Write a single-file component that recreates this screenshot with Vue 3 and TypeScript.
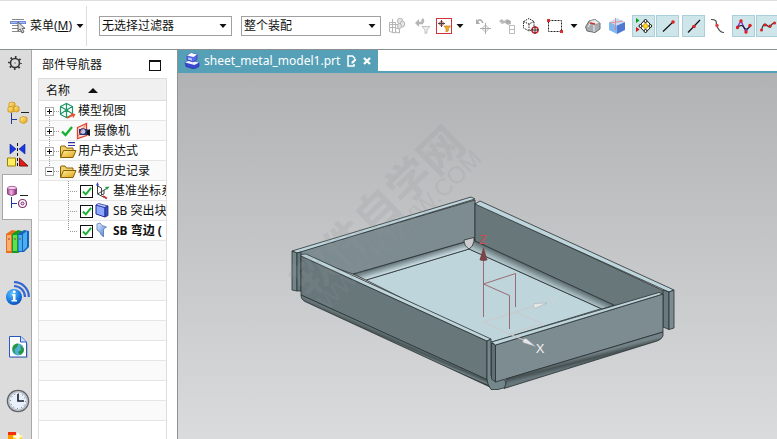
<script setup lang="ts">
import { ref } from 'vue'

interface Tool {
  id: string
  label: string
  kind: 'icon' | 'frame' | 'caret' | 'toggle'
  gap?: 's' | 'm'
}

interface TreeRow {
  icon: string
  text: string
  guide: 'first' | 'mid' | 'last'
  open?: boolean
  ticked?: boolean
}

interface Feature {
  icon: string
  text: string
  active?: boolean
}

const filter = ref('无选择过滤器')
const scope = ref('整个装配')
const checked = ref([true, true, true])

const tools: Tool[] = [
  { id: 't-boxes', label: '装配约束', kind: 'icon' },
  { id: 't-undofilter', label: '重置过滤器', kind: 'icon', gap: 's' },
  { id: 't-pickfilter', label: '选择过滤器', kind: 'frame' },
  { id: 't-caret', label: '更多过滤器', kind: 'caret' },
  { id: 't-undomove', label: '恢复位置', kind: 'icon', gap: 'm' },
  { id: 't-find', label: '查找', kind: 'icon' },
  { id: 't-cube', label: '显示隐藏对象', kind: 'icon' },
  { id: 't-rect', label: '矩形选择', kind: 'icon' },
  { id: 't-caret', label: '更多选择方式', kind: 'caret' },
  { id: 't-solid', label: '实体', kind: 'icon' },
  { id: 't-shade', label: '着色', kind: 'icon' },
  { id: 't-snap', label: '启用捕捉点', kind: 'toggle', gap: 's' },
  { id: 't-end', label: '端点', kind: 'toggle' },
  { id: 't-middle', label: '中点', kind: 'toggle', gap: 's' },
  { id: 't-curve', label: '曲线上的点', kind: 'icon' },
  { id: 't-pole', label: '极点', kind: 'toggle', gap: 's' },
  { id: 't-spline', label: '样条定义点', kind: 'toggle' },
]

const rail = [
  { id: 'r-gear', label: '设置', size: 'gear' },
  { id: 'r-assembly', label: '装配导航器', size: 'small' },
  { id: 'r-constraint', label: '约束导航器', size: 'small' },
  { id: 'r-part', label: '部件导航器', size: 'current' },
  { id: 'r-books', label: '重用库', size: 'small' },
  { id: 'r-info', label: 'HD3D 工具', size: 'large' },
  { id: 'r-web', label: 'Web 浏览器', size: 'large' },
  { id: 'r-clock', label: '历史记录', size: 'large' },
  { id: 'r-roles', label: '角色', size: 'large' },
]

const rows: TreeRow[] = [
  { icon: 'n-view', text: '模型视图', guide: 'first' },
  { icon: 'n-camera', text: '摄像机', guide: 'mid', ticked: true },
  { icon: 'n-expr', text: '用户表达式', guide: 'mid' },
  { icon: 'n-folder', text: '模型历史记录', guide: 'last', open: true },
]

const features: Feature[] = [
  { icon: 'n-csys', text: '基准坐标系' },
  { icon: 'n-tab', text: 'SB 突出块' },
  { icon: 'n-flange', text: 'SB 弯边 (', active: true },
]
</script>

<template>
  <div class="app">
    <svg class="sprite" width="0" height="0" aria-hidden="true">
      <defs>
        <linearGradient id="gold" x1="0" y1="0" x2="1" y2="1"><stop offset="0" stop-color="#fff3a0" /><stop offset="1" stop-color="#e0a010" /></linearGradient>
        <linearGradient id="pink" x1="0" x2="1"><stop offset="0" stop-color="#a04090" /><stop offset=".4" stop-color="#f0b8e4" /><stop offset="1" stop-color="#80206c" /></linearGradient>
        <linearGradient id="blue" x1="0" y1="0" x2="1" y2="1"><stop offset="0" stop-color="#e4f0ff" /><stop offset="1" stop-color="#3a6cd8" /></linearGradient>
        <radialGradient id="ball" cx=".4" cy=".3" r=".8"><stop offset="0" stop-color="#60c8ff" /><stop offset=".6" stop-color="#1878e0" /><stop offset="1" stop-color="#0840a0" /></radialGradient>

        <symbol id="t-menu" viewBox="0 0 16 16">
          <path d="M2 1.500h12M2 7.500h7M2 10.500h7M2 13.500h10" stroke="#888" stroke-width="1" />
          <path d="M0 3h16v3H0z" fill="#6c8ad8" /><path d="M1 4.500h14" stroke="#a8bcf0" />
          <path d="M8 4v9l2.200-2 1.800 4 2-1-1.800-3.600H15z" fill="#ddd" stroke="#555" stroke-width=".9" />
        </symbol>
        <symbol id="t-caret" viewBox="0 0 8 4"><path d="M.5 0h7L4 4z" fill="#111" /></symbol>
        <symbol id="t-boxes" viewBox="0 0 16 16">
          <g fill="none" stroke="#b5b5b5"><path d="M.5 4.500h6v5h-6zM.5 9.500v4l6 1.500V9.500M3.500 1v14M0 6.500h9M6.500 10l4 1v4l-4-1" /><ellipse cx="11" cy="3" rx="2.500" ry="3" fill="#e6e6e6" /><ellipse cx="13.500" cy="6" rx="2.200" ry="3" fill="#e6e6e6" /><ellipse cx="10.500" cy="8" rx="2" ry="2.500" fill="#e6e6e6" /></g>
        </symbol>
        <symbol id="t-undofilter" viewBox="0 0 16 16">
          <path d="M2 5h5q2-2 0-4" fill="none" stroke="#b5b5b5" stroke-width="2.500" /><path d="M0 5l4-4v8z" fill="#b5b5b5" />
          <path d="M7 8.500h8l-3 3.500v3l-2 .5V12z" fill="#eee" stroke="#c4c4c4" />
        </symbol>
        <symbol id="t-pickfilter" viewBox="0 0 16 16">
          <rect x=".5" y=".5" width="15" height="15" fill="#fff" stroke="#d0333c" />
          <circle cx="5.500" cy="5.500" r="2" fill="none" stroke="#b85050" /><path d="M5.500 2v7M2 5.500h7" stroke="#444" />
          <path d="M8 8h6.500l-2.200 2.700V13L10 14v-3.300z" fill="#f0ac30" stroke="#c88010" stroke-width=".7" />
        </symbol>
        <symbol id="t-undomove" viewBox="0 0 16 16">
          <path d="M2 4q3-5 6 1" fill="none" stroke="#aaa" stroke-width="1.600" /><path d="M1 1v5h4z" fill="#aaa" />
          <path d="M10.500 5v11M5 10.500h11" stroke="#aaa" /><path d="M10.500 7l3.500 3.500-3.500 3.500L7 10.500z" fill="none" stroke="#b5b5b5" />
        </symbol>
        <symbol id="t-find" viewBox="0 0 16 16">
          <path d="M0 3l3-2 2 2 3-2 4 2v3L9 7 6 5 3 6z" fill="#bbb" /><circle cx="9" cy="4" r="2" fill="#aaa" /><path d="M10.500 7v8.500M10.500 7.500h5v8h-5M10.500 11.500h5" fill="none" stroke="#bbb" />
        </symbol>
        <symbol id="t-cube" viewBox="0 0 16 16">
          <path d="M.5 3.500L6 .5l5 3v7L6 13l-5.500-3zM.5 3.500L6 6l5-2.500M6 6v7" fill="none" stroke="#222" stroke-dasharray="1.500 1" />
          <circle cx="12" cy="12" r="3" fill="#fff" stroke="#d02028" stroke-width="1.500" /><path d="M12 8v8M8 12h8" stroke="#333" />
        </symbol>
        <symbol id="t-rect" viewBox="0 0 16 16">
          <rect x="1.500" y="2.500" width="13" height="11" fill="none" stroke="#222" stroke-dasharray="2 1" />
          <path d="M0 1h3v3H0zM13 12h3v3h-3z" fill="#d83030" />
        </symbol>
        <symbol id="t-solid" viewBox="0 0 16 16">
          <path d="M.5 9L4 3l6-1.500L15 5v6l-5 3.500L2 13z" fill="#a8adb2" stroke="#6c6f74" /><path d="M4 3l6-1.500L15 5l-6 2z" fill="#e8ebed" stroke="#888" stroke-width=".6" /><path d="M3 9l3-5M9 7v7" stroke="#eee" /><path d="M5 5l5 1" stroke="#d03030" stroke-width="1.500" />
        </symbol>
        <symbol id="t-shade" viewBox="0 0 16 16">
          <path d="M0 4l8-4 8 4-8 3.500z" fill="#c8dcf8" /><path d="M0 4l8 3.500V16l-8-4z" fill="#80b8f0" /><path d="M16 4L8 7.500V16l8-4z" fill="#5078d0" /><path d="M6.500 0v12M1 5l13-2" stroke="#e87878" stroke-width=".8" />
        </symbol>
        <symbol id="t-snap" viewBox="0 0 16 16">
          <path d="M0 0l3.500 2.500L0 5z" fill="#08a018" /><path d="M0 9l3.500 2.500L0 14z" fill="#d01818" />
          <circle cx="9.500" cy="8" r="4.800" fill="#fff" stroke="#111" /><path d="M9.500 5l3 3-3 3-3-3z" fill="#ffd820" stroke="#c09000" />
          <g fill="#fff" stroke="#111"><circle cx="9.500" cy="3" r="1.500" /><circle cx="9.500" cy="13" r="1.500" /><circle cx="4.500" cy="8" r="1.500" /><circle cx="14.400" cy="8" r="1.400" /></g>
        </symbol>
        <symbol id="t-end" viewBox="0 0 16 16"><path d="M3 13.500L13 4" stroke="#111" stroke-width="1.200" /><circle cx="13" cy="4" r="1.800" fill="#e02020" /></symbol>
        <symbol id="t-middle" viewBox="0 0 16 16"><path d="M2 14.500L14 2" stroke="#111" stroke-width="1.200" /><circle cx="8" cy="8.500" r="1.800" fill="#e02020" /></symbol>
        <symbol id="t-curve" viewBox="0 0 16 16"><path d="M2 1.500c8 0 4 4 6 7s2 6 7 6" fill="none" stroke="#444" stroke-width="1.200" /><circle cx="8" cy="7.500" r="1.700" fill="#e04040" /></symbol>
        <symbol id="t-pole" viewBox="0 0 16 16"><path d="M1 9.500L5 3l5 11 4-7" fill="none" stroke="#8830d0" stroke-width="1.300" /><path d="M1 9.500q5-4 7 0t7-2" fill="none" stroke="#111" stroke-width="1.100" /><g fill="#e02020"><circle cx="1.500" cy="9.500" r="1.700" /><circle cx="5" cy="3" r="1.700" /><circle cx="10" cy="14" r="1.700" /><circle cx="14" cy="7.500" r="1.700" /></g></symbol>
        <symbol id="t-spline" viewBox="0 0 16 16"><path d="M1.500 12q2-8 5-5t4 2q1-4 5-4" fill="none" stroke="#333" stroke-width="1.200" /><g fill="#e02020"><circle cx="1.500" cy="12" r="1.500" /><circle cx="5" cy="7" r="1.600" /><circle cx="10" cy="8" r="1.600" /><circle cx="14.500" cy="5" r="1.500" /></g></symbol>

        <symbol id="r-gear" viewBox="0 0 24 24"><circle cx="9" cy="12" r="4.500" fill="none" stroke="#333" stroke-width="1.600" /><circle cx="9" cy="12" r="6" fill="none" stroke="#333" stroke-width="1.800" stroke-dasharray="1.700 3.010" stroke-dashoffset=".8" /><circle cx="9" cy="12" r=".8" fill="#777" /></symbol>
        <symbol id="r-assembly" viewBox="0 0 24 24">
          <g fill="url(#gold)" stroke="#d09010" stroke-width=".8"><path d="M3 2l3-1 3 1v4l-3 1-3-1z" /><path d="M2 6.500l3-1 3 1v4l-3 1-3-1z" /><path d="M8 6l2.500-1L13 6v4l-2.500 1L8 10z" /><path d="M14 17l3-1.500 4 1v4L18 22.500l-4-1.500z" /></g>
          <path d="M5.500 12v11M6 18.500h5" stroke="#2038a0" /><path d="M15 11.500h8" stroke="#222" />
        </symbol>
        <symbol id="r-constraint" viewBox="0 0 24 24">
          <path d="M4 1v10l6-5zM19 1v10l-6-5z" fill="#1838e0" stroke="#1020a0" stroke-width=".6" /><path d="M11.500 0v24" stroke="#111" stroke-dasharray="3 2" />
          <path d="M1.500 15h8v8h-8z" fill="#fff060" stroke="#a08000" /><path d="M13.500 15v8H22z" fill="#e02018" stroke="#801010" />
        </symbol>
        <symbol id="r-part" viewBox="0 0 24 24">
          <path d="M1.500 3v6q4 3 9 0V3" fill="url(#pink)" stroke="#803070" stroke-width=".8" /><ellipse cx="6" cy="3" rx="4.500" ry="1.700" fill="#f4d0ec" stroke="#a04890" stroke-width=".8" />
          <path d="M5.500 12v11M6 18.500h5" stroke="#2038a0" /><path d="M14 10.500h8" stroke="#222" /><circle cx="16.500" cy="18.500" r="4" fill="#fff" stroke="#80306c" stroke-width="1.200" /><circle cx="16.500" cy="18.500" r="1.500" fill="#f0d0e8" stroke="#80306c" />
        </symbol>
        <symbol id="r-books" viewBox="0 0 24 24">
          <path d="M0 5l6-4 5 1v20l-5 2H0z" fill="#e8701c" /><path d="M1 6h4v16H1z" fill="#f8b070" /><path d="M6 5l6-4 4 1v20l-4 2H6z" fill="#189828" /><path d="M7 6h4v16H7z" fill="#60e050" /><path d="M12 5l6-4 5 1v16l-5 5h-6z" fill="#1860b8" /><path d="M12.500 6h3.500v16h-3.500zM17 5l4-3v16l-4 4z" fill="#48b0f0" /><path d="M2 10h2M8 10h2M13 10h2" stroke="#844" stroke-width="1" />
        </symbol>
        <symbol id="r-info" viewBox="0 0 24 24">
          <path d="M8 1.200A14.500 14.500 0 0 1 22.800 16M8 5A11 11 0 0 1 19 16" fill="none" stroke="#3468d0" stroke-width="2.200" /><circle cx="8" cy="16" r="8" fill="url(#ball)" /><path d="M6 13h3.500v6H11v1.500H5.500V19H7v-4.500H6z" fill="#fff" /><circle cx="8.200" cy="10.700" r="1.500" fill="#fff" />
        </symbol>
        <symbol id="r-web" viewBox="0 0 24 24">
          <path d="M4 2h11l7 7v14H4z" fill="#999" opacity=".5" /><path d="M3.500 1.500H15L20.500 7v15h-17z" fill="#fff" stroke="#2858c0" /><path d="M14.500 1.500V7H20" fill="#d0e0ff" stroke="#2858c0" /><circle cx="12" cy="14.500" r="6" fill="#50b0d8" /><path d="M6.500 12q3-5 6-3l-2 4-2 1 1 5q-3-2-3-7zM14 10l4 4q0 4-4 6l-2-3 3-2z" fill="#28983c" />
        </symbol>
        <symbol id="r-clock" viewBox="0 0 24 24">
          <circle cx="12" cy="12" r="10.500" fill="#e8f0fc" stroke="#606468" stroke-width="1.500" /><circle cx="12" cy="12" r="9.200" fill="none" stroke="#b8bcc0" stroke-width="1.500" /><circle cx="12" cy="12" r="7.500" fill="none" stroke="#3c5070" stroke-width="1" stroke-dasharray=".8 3.127" /><path d="M12 5v7h6" fill="none" stroke="#181c28" stroke-width="1.600" />
        </symbol>
        <symbol id="r-roles" viewBox="0 0 24 24"><path d="M2 0h8v3H2z" fill="#f03010" /><path d="M2 3h5v15H2z" fill="#ff9800" /><path d="M7 3h9v15H7z" fill="#ffe030" /><path d="M12 0l1.500 3 4 1-4 1.500-1 6-2-5-4-2 4-1.500z" fill="#fffbe8" /></symbol>

        <symbol id="n-tick" viewBox="0 0 12 11"><path d="M1 5.500L4.500 9 11 1" fill="none" stroke="#18b030" stroke-width="2.400" /></symbol>
        <symbol id="n-view" viewBox="0 0 18 18"><path d="M1.500 4.500l6-3 6 3v8l-6 3-6-3zM1.500 4.500l6 3.500 6-3.500M7.500 1.500V15M1.500 12l6-4 6 4" fill="none" stroke="#209868" stroke-width="1.200" /><path d="M8 16l6-3M12 12l3.500.5-1.500 3" fill="none" stroke="#f05030" stroke-width="1.400" /></symbol>
        <symbol id="n-camera" viewBox="0 0 18 18"><path d="M2.500 5.500l9-4v12l-9 3z" fill="#f8e0dc" stroke="#e04028" stroke-width="1.300" /><path d="M4 7h7l4 1v5H4z" fill="#283878" /><circle cx="8" cy="9.500" r="3" fill="#b8c8f0" stroke="#182060" /><path d="M12 9l3-2v7l-3-1z" fill="#111" /><path d="M2 16L11 2" stroke="#f06848" stroke-width=".8" /></symbol>
        <symbol id="n-folder" viewBox="0 0 18 18"><path d="M1.500 15V5q0-1 1-1H6l1.500 2H14v9z" fill="#f0d068" stroke="#886008" /><path d="M1.500 15.500l3-7H17l-3 7z" fill="url(#gold)" stroke="#886008" /></symbol>
        <symbol id="n-expr" viewBox="0 0 18 18"><path d="M1.500 15V5q0-1 1-1H6l1.500 2H14v9z" fill="#f0d068" stroke="#886008" /><path d="M1.500 15.500l3-7H17l-3 7z" fill="url(#gold)" stroke="#886008" /><path d="M9 .7h7M9 3.500h7" stroke="#3030a0" stroke-width="1.200" /></symbol>
        <symbol id="n-csys" viewBox="0 0 18 18"><path d="M3.500 2v10l8 4M3.500 12l10-6M3.500 4l4 2v7M7 13l3-1V8" fill="none" stroke="#444" /><path d="M2 3.500L3.500 0 5 3.500z" fill="#3040c0" /><path d="M11 5l4.500-.5L13 8z" fill="#20a040" /><path d="M9 14l4 2.500" stroke="#d03030" stroke-width="1.500" /></symbol>
        <symbol id="n-tab" viewBox="0 0 18 18"><path d="M2 3l9 2.500V15l-9-3z" fill="#8ca8ff" stroke="#2830a0" /><path d="M2 3l2.500-1.500L14 4l-3 1.500z" fill="#c8d8ff" stroke="#2830a0" stroke-width=".8" /><path d="M11 5.500L14 4v9.500L11 15z" fill="#3850c8" stroke="#202880" stroke-width=".8" /></symbol>
        <symbol id="n-flange" viewBox="0 0 18 18"><path d="M3 2l3-1q1 3 6.500 4l-3 2v8L7 12.500Q6 9 3 8z" fill="url(#blue)" stroke="#5878a8" stroke-width=".8" /></symbol>
      </defs>
    </svg>

    <header class="toolbar">
      <button class="menu" type="button">
        <svg class="i16" aria-hidden="true"><use href="#t-menu" /></svg>
        <span>菜单(<u>M</u>)</span>
        <svg class="arrow" aria-hidden="true"><use href="#t-caret" /></svg>
      </button>
      <span class="divider"></span>
      <label class="combo">
        <select v-model="filter" aria-label="选择过滤器类型">
          <option>无选择过滤器</option>
        </select>
        <svg class="arrow" aria-hidden="true"><use href="#t-caret" /></svg>
      </label>
      <label class="combo scope">
        <select v-model="scope" aria-label="选择范围">
          <option>整个装配</option>
        </select>
        <svg class="arrow" aria-hidden="true"><use href="#t-caret" /></svg>
      </label>
      <div class="tools">
        <button
          v-for="(t, i) in tools"
          :key="i"
          type="button"
          :aria-label="t.label"
          :class="['tool', t.kind, t.gap ? 'gap-' + t.gap : '']"
        >
          <svg :class="t.kind === 'caret' ? 'arrow' : 'i16'" aria-hidden="true"><use :href="'#' + t.id" /></svg>
        </button>
      </div>
    </header>

    <div class="body">
      <nav class="rail" aria-label="资源条">
        <button v-for="r in rail" :key="r.id" type="button" :class="['res', r.size]" :aria-label="r.label">
          <svg aria-hidden="true"><use :href="'#' + r.id" /></svg>
        </button>
      </nav>

      <aside class="panel">
        <div class="panel-head">
          <h2>部件导航器</h2>
          <button class="restore" type="button" aria-label="最大化"></button>
        </div>
        <div class="tree">
          <button class="column" type="button">
            名称
            <svg width="10" height="5" viewBox="0 0 10 5" aria-hidden="true"><path d="M5 0l5 5H0z" fill="#111" /></svg>
          </button>
          <ul class="rows">
            <li v-for="r in rows" :key="r.text">
              <button class="expander" type="button" :aria-label="r.text" :aria-expanded="!!r.open">
                <svg width="20" height="20" viewBox="0 0 20 20" aria-hidden="true">
                  <path v-if="r.guide !== 'first'" class="dots" d="M10.500 0v6" />
                  <path v-if="r.guide !== 'last'" class="dots" d="M10.500 14v6" />
                  <path class="dots" d="M15 10.500h5" />
                  <rect x="6.500" y="6.500" width="8" height="8" fill="#fff" stroke="#aaa" />
                  <path d="M8 10.500h5" stroke="#111" />
                  <path v-if="!r.open" d="M10.500 8v5" stroke="#111" />
                </svg>
              </button>
              <svg v-if="r.ticked" class="tick" aria-hidden="true"><use href="#n-tick" /></svg>
              <svg class="i18" aria-hidden="true"><use :href="'#' + r.icon" /></svg>
              <span>{{ r.text }}</span>
            </li>
            <li v-for="(f, i) in features" :key="f.text">
              <svg class="branch" width="41" height="20" viewBox="0 0 41 20" aria-hidden="true">
                <path class="dots" :d="i < features.length - 1 ? 'M29.500 0v20' : 'M29.500 0v10'" />
                <path class="dots" d="M31 10.500h8" />
              </svg>
              <label class="feature" :class="{ active: f.active }">
                <span class="box">
                  <input v-model="checked[i]" type="checkbox" />
                  <svg v-if="checked[i]" aria-hidden="true"><use href="#n-tick" /></svg>
                </span>
                <svg class="i18" aria-hidden="true"><use :href="'#' + f.icon" /></svg>
                <span>{{ f.text }}</span>
              </label>
            </li>
          </ul>
        </div>
      </aside>

      <main class="work">
        <div class="tabs">
          <div class="tab">
            <svg width="16" height="16" viewBox="0 0 16 16" aria-hidden="true">
              <path d="M1 9.500l4-2 10 2v4L10 16l-8-2.500z" fill="#3a48d0" stroke="#2028a0" stroke-width=".6" /><path d="M1 9.500l4-2 10 2-4.500 2.500z" fill="#f0f4ff" />
              <path d="M3 2.500L7 0l6 1.500v5l-4 2.500-6-2z" fill="#5868e8" stroke="#2830a8" stroke-width=".6" /><path d="M3 2.500L7 0l6 1.500L9.500 4z" fill="#fff" /><path d="M4 6.500l4 1v-2l-4-1z" fill="#b8c8ff" />
            </svg>
            <span>sheet_metal_model1.prt</span>
            <svg class="modified" width="10" height="12" viewBox="0 0 10 12" aria-hidden="true"><path d="M6 1H1v10h6V9M5.500 1L8 3.500" fill="none" stroke="#fff" stroke-width="1.500" /><path d="M4.500 8.500V7L8 3.500 9.500 5 6 8.500z" fill="#fff" /></svg>
            <button class="close" type="button" aria-label="关闭">
              <svg width="8" height="8" viewBox="0 0 8 8" aria-hidden="true"><path d="M1 1l6 6M7 1L1 7" stroke="#fff" stroke-width="2.200" /></svg>
            </button>
          </div>
        </div>
        <div class="canvas">
          <svg class="scene" viewBox="178 73 599 366" role="img" aria-label="sheet_metal_model1">
            <defs>
              <linearGradient id="bendA" gradientUnits="userSpaceOnUse" x1="414" y1="257" x2="418.500" y2="272"><stop offset="0" stop-color="#68787c" /><stop offset=".45" stop-color="#c4d8de" /><stop offset=".7" stop-color="#e0f4fa" /><stop offset="1" stop-color="#c4dce2" /></linearGradient>
              <linearGradient id="bendB" gradientUnits="userSpaceOnUse" x1="545" y1="273" x2="539" y2="286"><stop offset="0" stop-color="#566568" /><stop offset=".55" stop-color="#a9bdc2" /><stop offset="1" stop-color="#c8e0e6" /></linearGradient>
              <linearGradient id="bendC" gradientUnits="userSpaceOnUse" x1="394" y1="337" x2="391" y2="344"><stop offset="0" stop-color="#68777a" /><stop offset=".5" stop-color="#4a5658" /><stop offset=".8" stop-color="#718286" /><stop offset="1" stop-color="#30383a" /></linearGradient>
              <linearGradient id="bendD" gradientUnits="userSpaceOnUse" x1="580" y1="357" x2="582" y2="365"><stop offset="0" stop-color="#748387" /><stop offset=".5" stop-color="#465153" /><stop offset="1" stop-color="#66767a" /></linearGradient>
            </defs>
            <g stroke="#283032" stroke-width=".8" stroke-linejoin="round">
              <path d="M366 280L469 249 602 309 610 306 492 342 487 341z" fill="#bed5db" />
              <path d="M353 274L475 239V241L469 249 366 280z" fill="url(#bendA)" />
              <path d="M474 240L615 305 602 309 469 249z" fill="url(#bendB)" />
              <path d="M296.500 252.500L475 200V239L353 274 301 256z" fill="#7d8c90" />
              <path d="M292 251L471 197 475 199 297 253z" fill="#bed5db" />
              <path d="M475 203L664 291V299L615 305.500 475 241z" fill="#68777a" />
              <path d="M475 204L480 201 674 290 669 292z" fill="#bed5db" />
              <path d="M464 240L474 237.500V241Q473 247 469 249 464 246 464 240z" fill="#cbcccd" />
              <path d="M292 251L297 253V291L292 290z" fill="#72868a" />
              <path d="M297 253L301 252V291H297z" fill="#67797d" />
              <path d="M663 290L669 292V329.500L663 327z" fill="#687a7e" />
              <path d="M669 292L674 290V328L669 329.500z" fill="#7b8c90" />
              <path d="M301 256L487 341V380L301 295z" fill="#68777a" />
              <path d="M301 256V254.500L306 254 491 339 487 341z" fill="#bed5db" />
              <path d="M301 295L487 379.500 490 387 306 302Q301 300 301 295z" fill="url(#bendC)" />
              <path d="M487 341L491 339V376L505 380 507 387 498 389.500H491Q487 384 487 379z" fill="#74878b" />
              <path d="M491.500 343L495.500 345V382L491.500 379z" fill="#5f7074" />
              <path d="M495.500 345L663 294V332L495.500 382z" fill="#7d8c90" />
              <path d="M491.500 342L659 292.500 663 294 495.500 345z" fill="#bed5db" />
              <path d="M506 379L663 332V336Q661 340 657 341L504 388.500Q507 384 506 379z" fill="url(#bendD)" />
            </g>
            <g class="mark" transform="rotate(-44 378 212)">
              <text class="name" x="378" y="227">软件自学网</text>
              <text class="site" x="381" y="248">WWW.RJZXW.COM</text>
            </g>

            <g fill="none" stroke="#ccc8ca">
              <path d="M483.500 322L515.500 312 535 306M483.500 322L509.500 334 543 323.500M515.500 312L543 324M509.500 334L526 341" />
            </g>
            <g fill="none" stroke="#986c72">
              <path d="M483.500 260V317" /><path d="M515.500 307V273.500L483.500 284 509.500 295.500V329" />
            </g>
            <path d="M483.500 247L479.500 260Q483.500 262 487.500 260z" fill="#7a4448" />
            <path d="M547 303L534 303.500Q532.500 306 535 308.500z" fill="#e4e6e7" stroke="#a0a6a8" stroke-width=".5" />
            <path d="M535.500 346.500L526 338.500Q522 339 523 342.500z" fill="#e4e6e7" stroke="#a0a6a8" stroke-width=".5" />
            <g class="axis">
              <text x="483" y="244" fill="#c0504f">Z</text>
              <text x="552" y="305" fill="#cdd4d8">Y</text>
              <text x="540" y="353" fill="#f0f0f0">X</text>
            </g>
          </svg>
        </div>
      </main>
    </div>
  </div>
</template>

<style>
html,
body,
#app {
  height: 100%;
  margin: 0;
}
</style>

<style scoped>
.app {
  display: flex;
  flex-direction: column;
  height: 100vh;
  overflow: hidden;
  background: #fff;
  color: #111;
  font-family: "Noto Sans", "Noto Sans CJK SC", sans-serif;
  font-size: 12px;
  line-height: 20px;
}
* { box-sizing: border-box; }
svg { display: block; flex: none; }
.sprite { position: absolute; }
button {
  flex: none;
  margin: 0;
  padding: 0;
  border: 0;
  background: none;
  color: inherit;
  font: inherit;
}
.i16 { width: 16px; height: 16px; }
.i18 { width: 18px; height: 18px; }
.arrow { width: 8px; height: 4px; }

.toolbar {
  display: flex;
  flex: none;
  align-items: center;
  height: 50px;
  padding: 2px 0 0 10px;
  border-top: 1px solid #ddd;
  border-bottom: 1px solid #8a8f90;
  overflow: hidden;
}
.menu {
  display: flex;
  align-items: center;
  gap: 4px;
  width: 76px;
}
.divider {
  flex: none;
  width: 1px;
  height: 40px;
  margin-right: 12px;
  background: #ddd;
}
.combo {
  position: relative;
  flex: none;
  width: 133px;
  margin-right: 9px;
}
.combo.scope {
  width: 140px;
  margin-right: 4px;
}
.combo select {
  display: block;
  width: 100%;
  height: 20px;
  padding: 0 20px 0 2px;
  border: 1px solid #a0a0a0;
  border-radius: 0;
  appearance: none;
  background: #fff;
  color: inherit;
  font: inherit;
  line-height: 18px;
}
.combo .arrow {
  position: absolute;
  top: 8px;
  right: 5px;
  pointer-events: none;
}
.tools { display: flex; flex: none; align-items: center; }
.tool {
  display: flex;
  align-items: center;
  justify-content: center;
  width: 24px;
  height: 22px;
}
.tool.frame { width: 18px; }
.tool.caret { width: 14px; }
.tool.toggle {
  width: 23px;
  margin-left: 1px;
  border: 1px solid #a9d0da;
  background: #cee5ea;
}
.tool.gap-s { margin-left: 2px; }
.tool.gap-m { margin-left: 4px; }
.tool.toggle.gap-s { margin-left: 3px; }

.body { display: flex; flex: 1; min-height: 0; }
.rail {
  display: flex;
  flex: none;
  flex-direction: column;
  width: 32px;
  border-right: 1px solid #a8a8a8;
  background: #dcdcdc;
}
.res {
  display: flex;
  align-items: center;
  height: 42px;
  padding-left: 6px;
}
.res svg { width: 24px; height: 24px; }
.res.gear { height: 26px; margin-bottom: 16px; }
.res.large { height: 54px; }
.res.small + .large { margin-top: 4px; }
.res.current {
  height: 46px;
  margin-top: -2px;
  margin-right: -1px;
  margin-left: 2px;
  padding-left: 3px;
  border: 1px solid #a8a8a8;
  border-right: 0;
  background: #fff;
}
.res:last-child {
  align-items: flex-start;
  padding-top: 4px;
}

.panel {
  display: flex;
  flex: none;
  flex-direction: column;
  width: 146px;
  padding: 0 10px 0 6px;
  border-right: 1px solid #8e9192;
}
.panel-head {
  display: flex;
  align-items: center;
  justify-content: space-between;
  height: 28px;
  padding: 2px 6px 0 4px;
}
.panel-head h2 { margin: 0; font-size: 12px; font-weight: 400; }
.restore {
  width: 12px;
  height: 11px;
  border: 1px solid #111;
  border-top-width: 2px;
}
.tree {
  display: flex;
  flex: 1;
  flex-direction: column;
  min-height: 0;
  border: 1px solid #ddd;
  border-bottom: 0;
  overflow: hidden;
}
.column {
  display: flex;
  align-items: center;
  gap: 18px;
  height: 22px;
  padding: 2px 0 0 7px;
  border-bottom: 1px solid #ddd;
  background: #f0f0f0;
}
.rows {
  flex: 1;
  margin: 0;
  padding: 0;
  list-style: none;
  background: repeating-linear-gradient(
    #fff 0 19px,
    #e6e6e6 19px 20px,
    #fafafa 20px 39px,
    #e6e6e6 39px 40px
  );
}
.rows li {
  display: flex;
  align-items: center;
  height: 20px;
  white-space: nowrap;
}
.rows li > span { margin-left: 1px; }
.dots { fill: none; stroke: #999; stroke-dasharray: 1 1; }
.tick { width: 12px; height: 11px; margin: 0 2px; }
.feature { display: flex; align-items: center; }
.feature .i18 { margin-left: 1px; }
.feature span + svg + span { margin-left: 1px; }
.active { font-weight: 700; }
.box { position: relative; display: block; width: 13px; height: 13px; }
.box input {
  display: block;
  width: 13px;
  height: 13px;
  margin: 0;
  border: 1px solid #111;
  appearance: none;
  background: #fff;
}
.box svg {
  position: absolute;
  top: 2px;
  left: 2px;
  width: 10px;
  height: 9px;
  pointer-events: none;
}

.work { display: flex; flex: 1; flex-direction: column; min-width: 0; }
.tabs {
  display: flex;
  flex: none;
  height: 23px;
  border-bottom: 2px solid #56a0b7;
}
.tab {
  display: flex;
  align-items: center;
  padding: 0 7px 0 6px;
  background: #56a0b7;
  color: #fff;
}
.tab span { margin-left: 4px; }
.modified { margin-left: 7px; }
.close { margin-left: 6px; }
.canvas {
  flex: 1;
  min-height: 0;
  background: linear-gradient(#b1b2b4, #dadbdc);
}
.scene { width: 100%; height: 100%; }
.axis { font-family: "Liberation Sans", sans-serif; font-size: 13px; text-anchor: middle; }
.mark { fill: #90969a; fill-opacity: 0.2; text-anchor: middle; }
.name { font-family: "Noto Sans CJK SC", sans-serif; font-size: 44px; font-weight: 700; }
.site { font-family: "Liberation Sans", sans-serif; font-size: 24px; }
</style>
